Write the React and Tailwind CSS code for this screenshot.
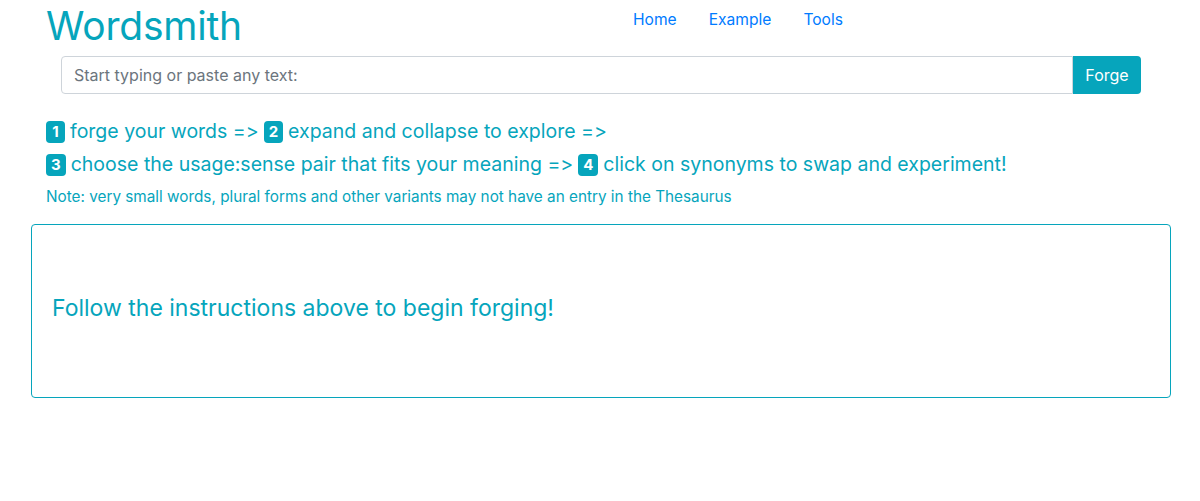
import React from 'react';

const Badge = ({ n }) => (
  <span className="inline-flex h-[22px] min-w-[19px] items-center justify-center rounded-[4px] bg-[#06a5bc] px-[5px] text-[15px] font-bold leading-none text-white">
    {n}
  </span>
);

export default function App() {
  return (
    <div className="min-h-[501px] bg-white font-['Inter',sans-serif] text-[#212529] [font-feature-settings:'calt'_0,'liga'_0]">
      {/* Header */}
      <div className="flex items-start">
        <h1 className="ml-[46px] mt-[2px] text-[39px] leading-[48px] font-normal tracking-[-0.2px] text-[#06a5bc]">Wordsmith</h1>
        <nav className="ml-[391px] mt-[10px] flex text-[15.6px] leading-[20px] text-[#007bff]">
          <a className="pr-4">Home</a>
          <a className="px-4">Example</a>
          <a className="px-4">Tools</a>
        </nav>
      </div>

      {/* Input */}
      <div className="ml-[61px] mr-[59px] mt-[6px] flex h-[38px]">
        <div className="flex flex-1 items-center rounded-l-[4px] border border-[#ced4da] px-3 text-[16px] text-[#6c757d]">
          Start typing or paste any text:
        </div>
        <button className="w-[68px] rounded-r-[4px] bg-[#06a5bc] text-[16px] text-white">Forge</button>
      </div>

      {/* Steps */}
      <div className="ml-[46px] mt-[21px] text-[#06a5bc]">
        <div className="flex h-[33px] items-center gap-[5px] text-[19.5px]">
          <Badge n="1" /> <span>forge your words =&gt;</span> <Badge n="2" /> <span>expand and collapse to explore =&gt;</span>
        </div>
        <div className="flex h-[33px] items-center gap-[5px] text-[19.5px]">
          <Badge n="3" /> <span>choose the usage:sense pair that fits your meaning =&gt;</span> <Badge n="4" /> <span>click on synonyms to swap and experiment!</span>
        </div>
        <p className="mt-[4px] text-[15.3px] leading-[24px]">Note: very small words, plural forms and other variants may not have an entry in the Thesaurus</p>
      </div>

      {/* Result box */}
      <div className="ml-[31px] mr-[29px] mt-[15px] h-[174px] rounded-[4px] border border-[#06a5bc] px-5 pt-[67px]">
        <h4 className="text-[23px] leading-[32px] text-[#06a5bc]">Follow the instructions above to begin forging!</h4>
      </div>
    </div>
  );
}
